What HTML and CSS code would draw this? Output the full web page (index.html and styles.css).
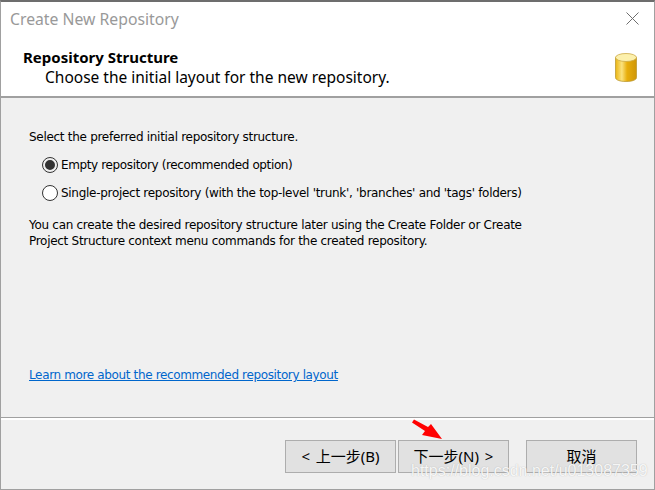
FILE: index.html
```html
<!DOCTYPE html>
<html lang="en">
<head>
    <meta charset="UTF-8">
    <meta name="viewport" content="width=device-width, initial-scale=1.0">
    <title>Create New Repository</title>
    <link rel="stylesheet" href="styles.css">
</head>
<body>
    <div class="window">
        <div class="titlebar">
            <span class="title">Create New Repository</span>
            <svg class="close" width="13" height="13" viewBox="0 0 13 13">
                <path d="M0.5 0.5L12.5 12.5M12.5 0.5L0.5 12.5" stroke="#6e6e6e" stroke-width="1" fill="none"/>
            </svg>
        </div>
        <div class="header">
            <div>
                <h1>Repository Structure</h1>
                <p>Choose the initial layout for the new repository.</p>
            </div>
            <svg class="db-icon" width="22" height="29" viewBox="0 0 22 29">
                <defs>
                    <linearGradient id="side" x1="0" x2="1" y1="0" y2="0">
                        <stop offset="0" stop-color="#eab512"/>
                        <stop offset="0.3" stop-color="#fbe27e"/>
                        <stop offset="0.55" stop-color="#e8ae0c"/>
                        <stop offset="1" stop-color="#cf9608"/>
                    </linearGradient>
                </defs>
                <path d="M0.5 4.5V24.5C0.5 27 5 28.5 11 28.5S21.5 27 21.5 24.5V4.5Z" fill="url(#side)" stroke="#bd9a35" stroke-width="0.8"/>
                <ellipse cx="11" cy="4.5" rx="10.5" ry="4" fill="#fcf0ac" stroke="#cdaa45" stroke-width="0.8"/>
            </svg>
        </div>
        <div class="content">
            <p class="intro">Select the preferred initial repository structure.</p>
            <div class="option"><span class="radio checked"></span><span class="option-short">Empty repository (recommended option)</span></div>
            <div class="option"><span class="radio"></span>Single-project repository (with the top-level 'trunk', 'branches' and 'tags' folders)</div>
            <p class="note">You can create the desired repository structure later using the Create Folder or Create<br>Project Structure context menu commands for the created repository.</p>
            <a class="learn" href="#">Learn more about the recommended repository layout</a>
        </div>
        <div class="footer">
            <button class="btn">&lt; 上一步(B)</button>
            <button class="btn next">下一步(N) &gt;</button>
            <button class="btn">取消</button>
        </div>
    </div>
    <svg class="arrow" width="36" height="24" viewBox="0 0 36 24">
        <path d="M1 3.5L3 0.5L17 8L20 5L31 20L11 16L14 12Z" fill="#f00"/>
    </svg>
    <div class="watermark">https://blog.csdn.net/u013087359</div>
</body>
</html>
```

FILE: styles.css
```css
html, body {
    margin: 0;
    padding: 0;
}
body {
    position: relative;
    width: 655px;
    height: 490px;
    overflow: hidden;
    background: #fff;
    font-family: 'DejaVu Sans', 'Noto Sans CJK SC', sans-serif;
    font-size: 12px;
    color: #000;
}
.window {
    box-sizing: border-box;
    width: 655px;
    height: 490px;
    display: flex;
    flex-direction: column;
    border: 1px solid #a0a0a0;
    border-top: 2px solid #6d6d6d;
}
.titlebar {
    height: 35px;
    box-sizing: border-box;
    display: flex;
    align-items: center;
    justify-content: space-between;
    padding: 0 15px 2px 9px;
    background: #fff;
}
.title {
    font-family: 'Noto Sans', sans-serif;
    font-size: 15.75px;
    color: #999;
}
.header {
    height: 61px;
    box-sizing: border-box;
    display: flex;
    justify-content: space-between;
    padding: 10px 17px 0 22px;
    background: #fff;
    border-bottom: 2px solid #a0a0a0;
}
.header h1 {
    margin: 0;
    font-family: 'Noto Sans', sans-serif;
    font-size: 15px;
    font-weight: 700;
    line-height: 20px;
}
.header p {
    margin: 0 0 0 22px;
    font-family: 'Noto Sans', sans-serif;
    font-size: 15.5px;
    line-height: 20px;
}
.db-icon {
    margin-top: 6px;
}
.content {
    flex: 1;
    display: flex;
    flex-direction: column;
    padding: 31px 0 0 28px;
    background: #f0f0f0;
    border-bottom: 1px solid #a0a0a0;
    letter-spacing: -0.29px;
}
.intro {
    margin: 0 0 6px;
    line-height: 16px;
}
.option {
    display: flex;
    align-items: center;
    height: 28px;
    margin-left: 13px;
}
.option-short {
    letter-spacing: -0.37px;
}
.radio {
    box-sizing: border-box;
    width: 16px;
    height: 16px;
    margin-right: 3px;
    border: 1px solid #333;
    border-radius: 50%;
    background: #fff;
}
.radio.checked {
    border: 3px solid #f0f0f0;
    outline: 1px solid #333;
    outline-offset: -1px;
    background: #333;
}
.note {
    margin: 10px 0 0;
    line-height: 16px;
}
.learn {
    margin-top: 119px;
    color: #0066cc;
    letter-spacing: -0.36px;
}
.footer {
    height: 71px;
    box-sizing: border-box;
    display: flex;
    align-items: flex-start;
    padding: 20px 0 0 284px;
    background: #f0f0f0;
    border-top: 2px solid #fff;
}
.btn {
    width: 111px;
    height: 33px;
    padding: 0 0 2px;
    margin-right: 2px;
    font-family: 'Noto Sans', 'Noto Sans CJK SC', sans-serif;
    font-size: 15px;
    word-spacing: 2px;
    color: #000;
    background: #e1e1e1;
    border: 1px solid #adadad;
}
.btn.next {
    margin-right: 17px;
}
.arrow {
    position: absolute;
    left: 411px;
    top: 419px;
}
.watermark {
    position: absolute;
    left: 411px;
    top: 462px;
    font-family: 'Liberation Sans', sans-serif;
    font-size: 16px;
    color: rgba(255, 255, 255, 0.9);
    text-shadow: 0 0 1px rgba(120, 120, 120, 0.5);
}
```
